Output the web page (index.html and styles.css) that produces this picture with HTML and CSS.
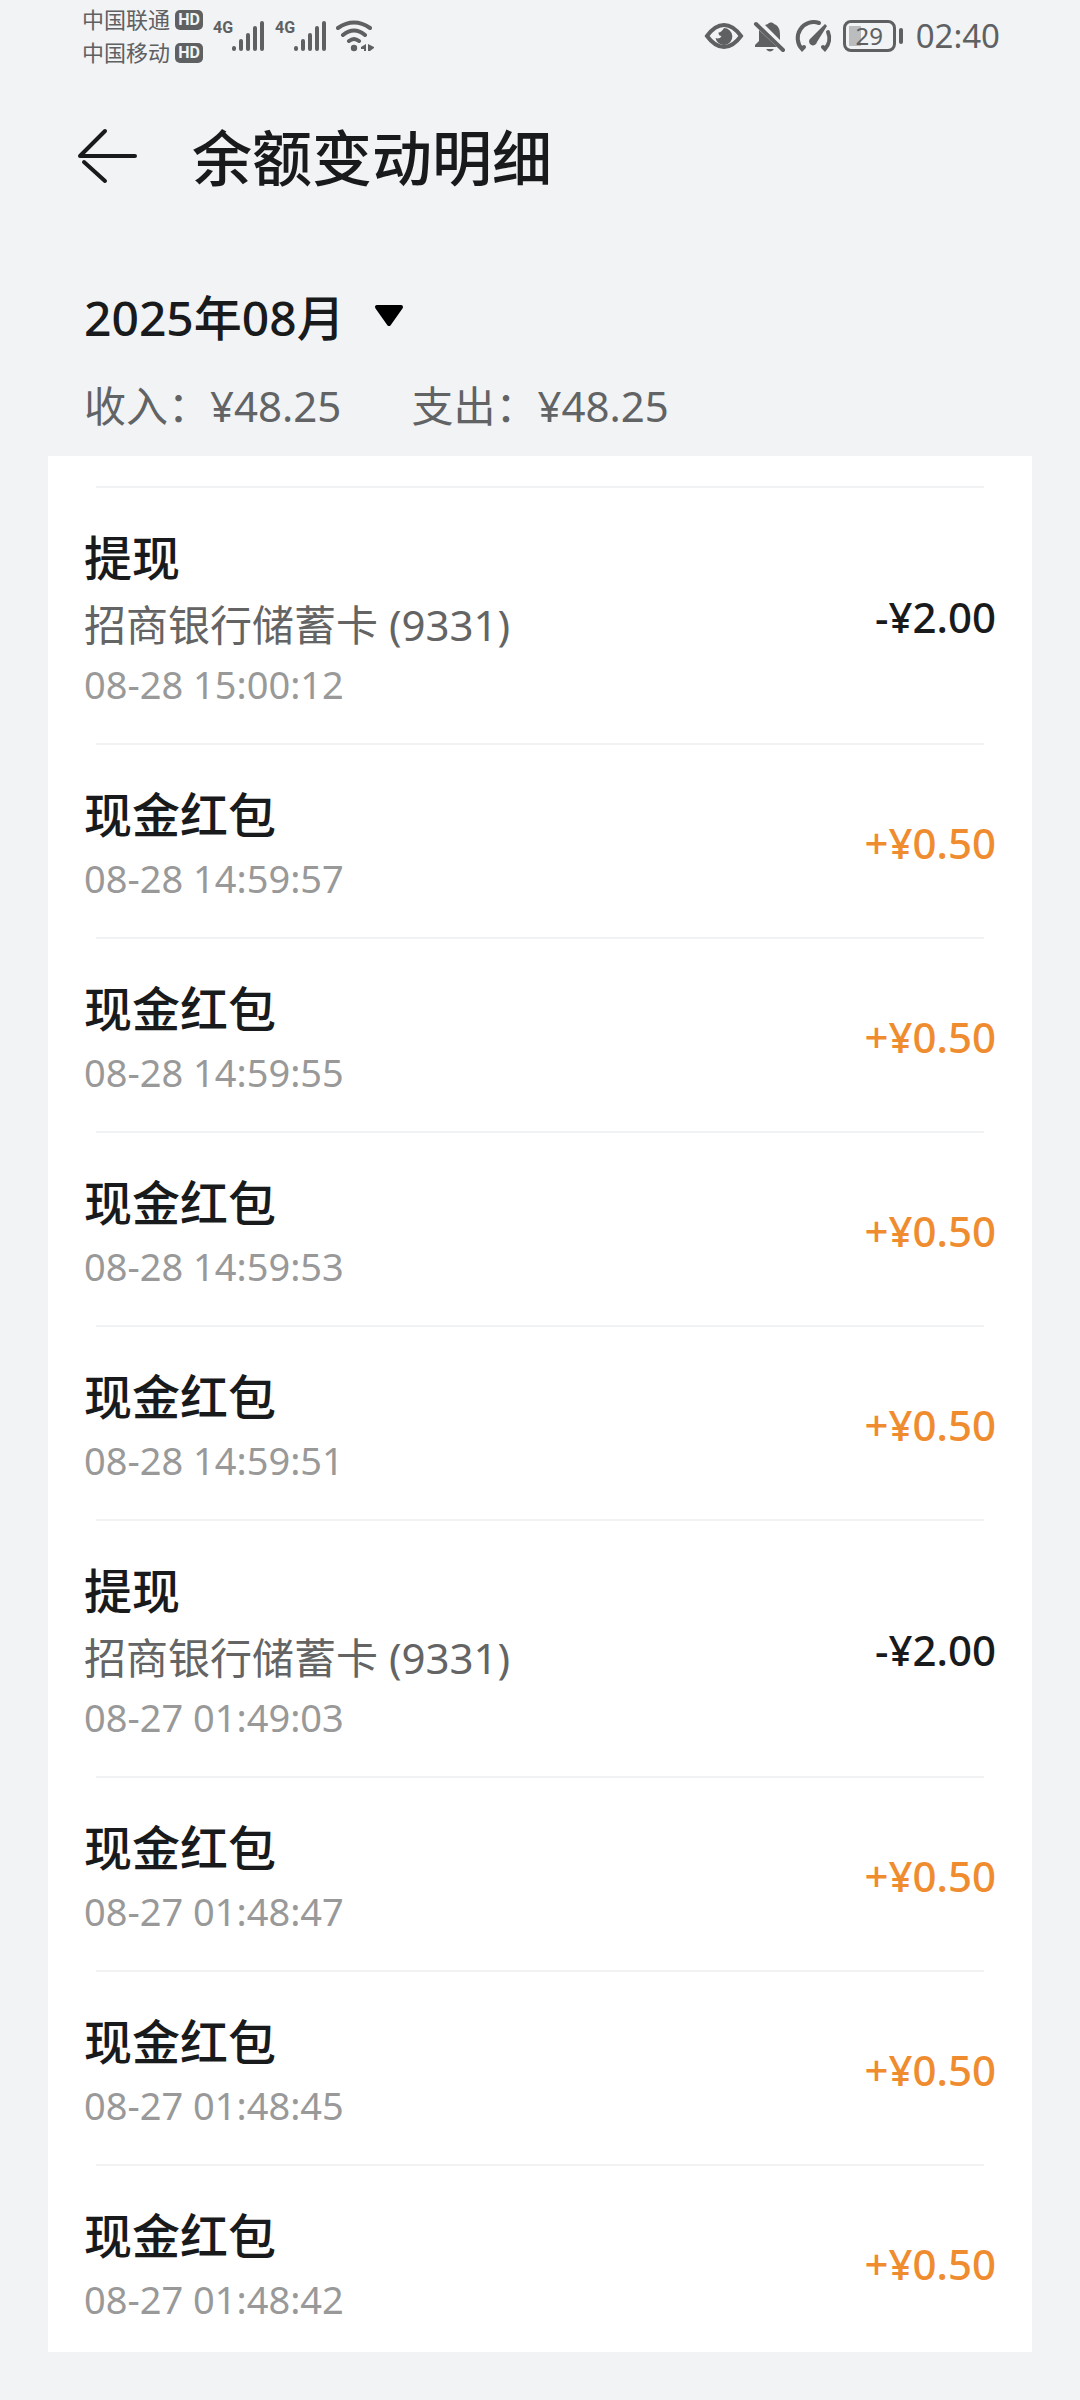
FILE: index.html
```html
<!DOCTYPE html>
<html lang="zh-CN">
<head>
<meta charset="utf-8">
<meta name="viewport" content="width=device-width, initial-scale=1">
<title>余额变动明细</title>
<link rel="stylesheet" href="styles.css">
</head>
<body>
<div class="status">
  <div class="carriers">
    <div class="carrier">中国联通<span class="hd">HD</span></div>
    <div class="carrier">中国移动<span class="hd">HD</span></div>
  </div>
  <div class="signal">
    <span class="net">4G</span>
    <svg width="34" height="32" viewBox="0 0 34 32" aria-hidden="true"><path d="M3 29v-1M10 29v-8M17 29V15M24 29V8M31 29V3" class="bars"/></svg>
  </div>
  <div class="signal">
    <span class="net">4G</span>
    <svg width="34" height="32" viewBox="0 0 34 32" aria-hidden="true"><path d="M3 29v-1M10 29v-8M17 29V15M24 29V8M31 29V3" class="bars"/></svg>
  </div>
  <svg class="wifi" width="40" height="32" viewBox="0 0 40 32" aria-hidden="true">
    <path d="M3 8Q19-3 35 8M8 15Q19 6 30 15M14 21Q19 17 24 21" class="line"/>
    <circle cx="19" cy="28" r="3.2"/>
    <path d="M31 24v7h-2v-2h-3v-2zM33 24l6 3v1l-4 3h-2z"/>
  </svg>
  <div class="status-right">
    <svg width="40" height="32" viewBox="0 0 40 32" aria-hidden="true">
      <path d="M3 16Q11 5 20 5T37 16Q29 27 20 27T3 16z" class="line"/>
      <path d="M20 8a8.500 8.500 0 1 1-8.500 10c2 1 5 .5 6-2-2 0-3-1-3-3.500 2 0 4-2 5.500-4.500z"/>
    </svg>
    <svg width="34" height="34" viewBox="0 0 34 34" aria-hidden="true">
      <path d="M13 6l3-1c1-2 5-2 6 0 5 2 6 6 6 11v5zM7 11l18 17H3v-2l4-4z"/>
      <path d="M14 30h8q-4 5-8 0z"/>
      <path d="M4 5l27 26" class="line"/>
    </svg>
    <svg width="38" height="34" viewBox="0 0 38 34" aria-hidden="true">
      <path d="M25 4A16 16 0 0 0 8 30l2-2M34 13A16 16 0 0 1 31 30l-2-2" class="line"/>
      <path d="M33 7L23 23a4 4 0 1 1-6-4L31 5z"/>
    </svg>
    <div class="battery"><span>29</span></div>
    <time>02:40</time>
  </div>
</div>

<header class="bar">
  <button class="back" type="button" aria-label="返回">
    <svg width="62" height="56" viewBox="0 0 62 56" aria-hidden="true"><path d="M59 28H4L29 3M29 53L8 34" /></svg>
  </button>
  <h1>余额变动明细</h1>
</header>

<main>
  <section class="summary">
    <button class="month" type="button">2025年08月
      <svg width="32" height="32" viewBox="0 0 32 32" aria-hidden="true"><path d="M4 5h24L16 22z"/></svg>
    </button>
    <p class="totals"><span>收入：¥48.25</span><span>支出：¥48.25</span></p>
  </section>

  <ul class="list">
    <li><div class="row"><div class="info"><h2>提现</h2><p class="card">招商银行储蓄卡 (9331)</p><time>08-28 15:00:12</time></div><span class="amount">-¥2.00</span></div></li>
    <li><div class="row"><div class="info"><h2>现金红包</h2><time>08-28 14:59:57</time></div><span class="amount in">+¥0.50</span></div></li>
    <li><div class="row"><div class="info"><h2>现金红包</h2><time>08-28 14:59:55</time></div><span class="amount in">+¥0.50</span></div></li>
    <li><div class="row"><div class="info"><h2>现金红包</h2><time>08-28 14:59:53</time></div><span class="amount in">+¥0.50</span></div></li>
    <li><div class="row"><div class="info"><h2>现金红包</h2><time>08-28 14:59:51</time></div><span class="amount in">+¥0.50</span></div></li>
    <li><div class="row"><div class="info"><h2>提现</h2><p class="card">招商银行储蓄卡 (9331)</p><time>08-27 01:49:03</time></div><span class="amount">-¥2.00</span></div></li>
    <li><div class="row"><div class="info"><h2>现金红包</h2><time>08-27 01:48:47</time></div><span class="amount in">+¥0.50</span></div></li>
    <li><div class="row"><div class="info"><h2>现金红包</h2><time>08-27 01:48:45</time></div><span class="amount in">+¥0.50</span></div></li>
    <li><div class="row"><div class="info"><h2>现金红包</h2><time>08-27 01:48:42</time></div><span class="amount in">+¥0.50</span></div></li>
  </ul>
</main>
</body>
</html>
```
FILE: styles.css
```css
* { box-sizing: border-box; margin: 0; padding: 0; }

body {
  background: #f1f3f5;
  color: #191a1b;
  font-family: "Noto Sans", "Noto Sans CJK SC", sans-serif;
}

button {
  border: 0;
  background: none;
  color: inherit;
  font: inherit;
  cursor: pointer;
}

svg { display: block; flex: none; }

/* status bar */
.status {
  display: flex;
  align-items: center;
  height: 72px;
  padding: 0 80px 0 82px;
  color: #5f6062;
}
.status svg { fill: currentColor; }
.status .bars, .status .line {
  fill: none;
  stroke: currentColor;
  stroke-width: 4;
  stroke-linecap: round;
}

.carrier {
  display: flex;
  align-items: center;
  gap: 5px;
  font-size: 22px;
  line-height: 33px;
}
.hd {
  width: 28px;
  border-radius: 5px;
  background: #5f6062;
  color: #f1f3f5;
  font: bold 16px/20px "Liberation Sans Narrow", "Roboto", sans-serif;
  text-align: center;
}
.signal { display: flex; margin-left: 10px; }
.net {
  width: 18px;
  font: bold 16px/16px "Liberation Sans Narrow", "Roboto", sans-serif;
}
.wifi { margin-left: 8px; }

.status-right {
  display: flex;
  align-items: center;
  gap: 8px;
  margin-left: auto;
}
.battery {
  position: relative;
  width: 53px;
  height: 32px;
  margin: 0 12px 0 3px;
  border: 3px solid #5f6062;
  border-radius: 8px;
  background: linear-gradient(#bbbcbe, #bbbcbe) 3px 3px / 12px 20px no-repeat;
  font-size: 24px;
  line-height: 26px;
  text-align: center;
}
.battery::after {
  content: "";
  position: absolute;
  top: 5px;
  right: -10px;
  width: 4px;
  height: 16px;
  border-radius: 2px;
  background: #5f6062;
}
.status time { font-size: 33px; line-height: 40px; }

/* title bar */
.bar {
  display: flex;
  align-items: center;
  gap: 54px;
  height: 168px;
  padding: 0 76px;
}
.back path {
  fill: none;
  stroke: #191a1b;
  stroke-width: 4;
  stroke-linecap: round;
  stroke-linejoin: round;
}
h1 { padding-top: 4px; font-size: 60px; font-weight: 500; line-height: 80px; }

/* month and totals */
.summary { padding: 42px 84px 18px; }
.month {
  display: flex;
  align-items: center;
  gap: 28px;
  font-size: 48px;
  font-weight: 500;
  line-height: 72px;
}
.month path { stroke: #000; stroke-width: 4; stroke-linejoin: round; }
.totals {
  display: flex;
  gap: 70px;
  margin-top: 20px;
  color: #626365;
  font-size: 42px;
  line-height: 64px;
}

/* transactions */
.list {
  margin: 0 48px 48px;
  padding-top: 30px;
  background: #fff;
  list-style: none;
}
.list li::before {
  content: "";
  display: block;
  height: 2px;
  margin: 0 48px;
  background: #f1f2f3;
}
.row {
  display: flex;
  align-items: center;
  justify-content: space-between;
  padding: 38px 36px 35px;
}
.list li:last-child .row { padding-bottom: 29px; }
.info { display: grid; gap: 7px; }
h2 { font-size: 48px; font-weight: 500; line-height: 64px; }
.card { color: #646464; font-size: 42px; line-height: 56px; }
.info time { color: #999; font-size: 38px; line-height: 48px; }
.amount { font-size: 42px; font-weight: 500; line-height: 56px; }
.in { color: #f08c30; }
```
